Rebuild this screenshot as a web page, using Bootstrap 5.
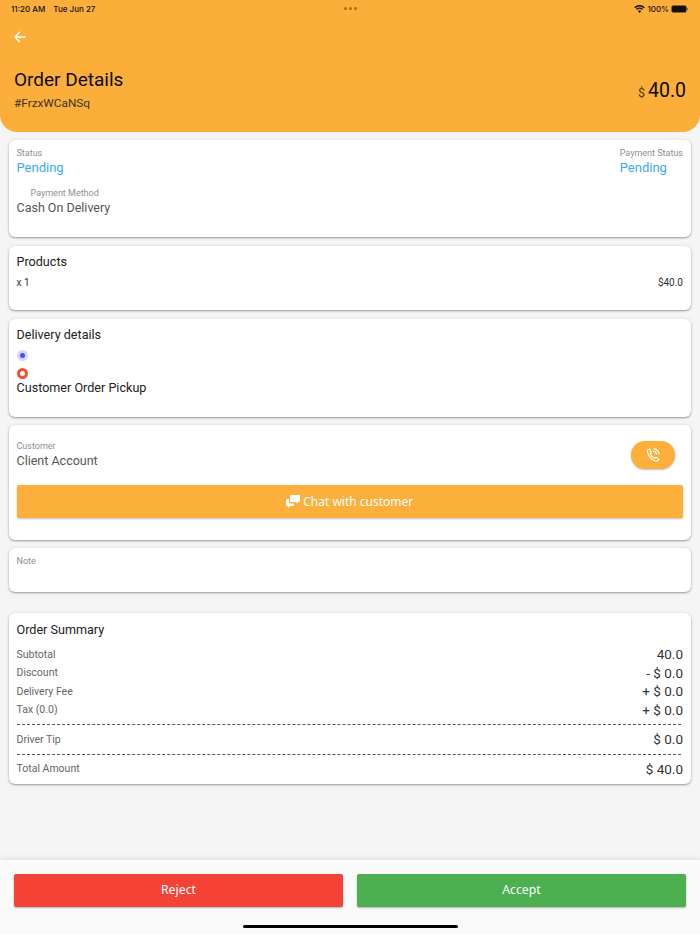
<!DOCTYPE html>
<html lang="en">
<head>
<meta charset="utf-8">
<title>Order Details</title>
<link href="https://cdn.jsdelivr.net/npm/bootstrap@5.3.0/dist/css/bootstrap.min.css" rel="stylesheet">
<style>
html,body{height:100%}
body{width:700px;height:934px;background:#f5f5f5;font-family:"Roboto","Noto Sans",sans-serif;color:#222;overflow:hidden}
.app{height:934px}
.hero{background:#fbae3a;height:132px;border-radius:0 0 17px 17px;padding:0 14px}
.statusbar{height:17px;font-family:"Inter",sans-serif;font-size:8px;font-weight:500;color:#111;margin:0 -3px}
.sb-side{flex:1 1 0}
.dots{gap:2px}
.dots i{width:3px;height:3px;border-radius:50%;background:#a86c14;display:block}
.back{margin-top:14px;height:15px;line-height:0}
.hero-main{margin-top:21px}
.hero-title{font-size:19px;font-weight:400;color:#0b0b0b;line-height:26px;margin:0}
.hero-id{font-size:11.800px;color:#3a3320;line-height:18px;margin-top:1px}
.hero-price{font-size:19.5px;color:#0b0b0b;line-height:26px;margin-top:4px}
.hero-price small{font-size:12.5px;color:#4a3a18;margin-right:3px}
.panel{margin:0 9px;border:0;border-radius:6px;background:#fff;box-shadow:0 1px 2px rgba(0,0,0,.35),0 0 4px rgba(0,0,0,.08);padding:0 8px 0 7.500px}
.cap{font-size:9px;color:#8d8d95;line-height:11px}
.pending{font-size:13px;color:#39a9f8;line-height:17px}
.val{font-size:12.500px;color:#555;line-height:17px}
.ttl{font-size:12.600px;color:#222;line-height:17px}
.p1{height:97px;margin-top:8px;padding-top:8px}
.p2{height:64px;margin-top:9px;padding-top:7px}
.p3{height:98px;margin-top:9px;padding-top:7px}
.p4{height:115px;margin-top:8px;padding-top:16px}
.p5{height:44px;margin-top:8px;padding-top:8px}
.p6{height:171px;margin-top:21px;padding-top:8px}
.mini{font-size:10px;color:#333;line-height:13px}
.radio-a{width:11px;height:11px;border-radius:50%;background:#d5d8fb;margin-top:7px;display:flex;align-items:center;justify-content:center}
.radio-a i{width:5px;height:5px;border-radius:50%;background:#4650f0;display:block}
.radio-b{width:11px;height:11px;border-radius:50%;border:3px solid #f4512f;margin-top:7px;background:#fff}
.call{width:44px;height:28px;border-radius:14px;background:#fcaf3a;box-shadow:0 1px 2px rgba(0,0,0,.25);margin-right:8.500px;margin-top:-1px;border:0;padding:0}
.chat{height:33px;background:#fcaf3a;color:#fff;border:0;border-radius:2px;font-family:"Noto Sans",sans-serif;font-size:12px;box-shadow:0 1px 2px rgba(0,0,0,.25);margin-top:16px;width:100%;gap:3px;padding:0}
.rowline{height:18.5px}
.rowline .lbl{font-size:10.500px;color:#666;line-height:18px;padding-top:.5px}
.rowline .amt{font-size:13.500px;color:#333;line-height:18px}
.dash{border-top:1px dashed #555;margin:5px 2px 5px 0}
.bottom{position:absolute;left:0;right:0;top:860px;height:74px;background:#fafafa;box-shadow:0 -1px 6px rgba(0,0,0,.1);padding:14px 14px 0}
.act{height:33px;width:329px;border:0;border-radius:2px;color:#fff;font-size:12.300px;padding:0;box-shadow:0 1px 2px rgba(0,0,0,.3);font-family:"Noto Sans",sans-serif}
.rej{background:#f44336}.acc{background:#4caf50}
.home{position:absolute;left:243px;top:65px;width:215px;height:3px;border-radius:2px;background:#000}
</style>
</head>
<body>
<div class="app position-relative">
<header class="hero">
  <div class="statusbar d-flex align-items-center justify-content-between">
    <div class="sb-side d-flex" style="gap:8px"><span>11:20 AM</span><span>Tue Jun 27</span></div>
    <div class="dots d-flex"><i></i><i></i><i></i></div>
    <div class="sb-side d-flex align-items-center justify-content-end" style="gap:2px">
      <svg width="11" height="8" viewBox="0 0 11 8"><path d="M5.5 8 3.8 6a2.4 2.4 0 0 1 3.4 0Z M2.9 5 2 4a5 5 0 0 1 7 0L8.100 5a3.700 3.700 0 0 0-5.200 0Z M1.200 3.200.2 2.200a7.500 7.500 0 0 1 10.600 0l-1 1a6.100 6.100 0 0 0-8.600 0Z" fill="#111"/></svg>
      <span>100%</span>
      <svg width="18" height="8" viewBox="0 0 18 8"><rect x=".5" y=".5" width="15" height="7" rx="2" fill="#111" stroke="#8a6420"/><rect x="16" y="3" width="1" height="2" fill="#8a6420"/></svg>
    </div>
  </div>
  <div class="back"><svg width="12" height="12" viewBox="0 0 12 12" fill="none" stroke="#fff" stroke-width="1.400" stroke-linecap="round" stroke-linejoin="round"><path d="M11 6H1M5.500 1.200 1 6l4.500 4.800"/></svg></div>
  <div class="hero-main d-flex justify-content-between align-items-center">
    <div><h1 class="hero-title">Order Details</h1><div class="hero-id">#FrzxWCaNSq</div></div>
    <div class="hero-price"><small>$</small>40.0</div>
  </div>
</header>

<section class="card panel p1">
  <div class="d-flex justify-content-between">
    <div><div class="cap">Status</div><div class="pending">Pending</div></div>
    <div><div class="cap">Payment Status</div><div class="pending">Pending</div></div>
  </div>
  <div class="cap" style="padding-left:14px;margin-top:12px">Payment Method</div>
  <div class="val">Cash On Delivery</div>
</section>

<section class="card panel p2">
  <div class="ttl">Products</div>
  <div class="d-flex justify-content-between mini" style="margin-top:6px"><span>x 1</span><span>$40.0</span></div>
</section>

<section class="card panel p3">
  <div class="ttl">Delivery details</div>
  <div class="radio-a"><i></i></div>
  <div class="radio-b"></div>
  <div class="ttl">Customer Order Pickup</div>
</section>

<section class="card panel p4">
  <div class="d-flex justify-content-between align-items-center">
    <div><div class="cap">Customer</div><div class="val">Client Account</div></div>
    <button class="call d-flex align-items-center justify-content-center" type="button" aria-label="Call">
      <svg width="14" height="14" viewBox="0 0 14 14" fill="none" stroke="#fff" stroke-width="1.200" stroke-linecap="round" stroke-linejoin="round"><path d="M3.600 1 2 1.800C1 2.600 1.200 4.400 2.500 6.800 4 9.800 7 12.600 9.800 13c1.500.2 2.600-.4 3-1.800l-2.800-2-1.400 1.100C7 9.600 5 7.500 4.200 5.800l1.200-1.300Z"/><path d="M7.500 3.200a3.600 3.600 0 0 1 3 3M8 .8a6 6 0 0 1 5 5"/></svg>
    </button>
  </div>
  <button class="chat d-flex align-items-center justify-content-center" type="button">
    <svg width="14" height="13" viewBox="0 0 14 13" fill="#fff"><path d="M5 0h8a1 1 0 0 1 1 1v5a1 1 0 0 1-1 1h-1v2l-2-2H5a1 1 0 0 1-1-1V1a1 1 0 0 1 1-1Z"/><path d="M1 4h2v3a1.500 1.500 0 0 0 1.500 1.500H8V10a1 1 0 0 1-1 1H4l-2 2v-2H1a1 1 0 0 1-1-1V5a1 1 0 0 1 1-1Z"/></svg>
    <span>Chat with customer</span>
  </button>
</section>

<section class="card panel p5"><div class="cap">Note</div></section>

<section class="card panel p6">
  <div class="ttl" style="margin-bottom:7px">Order Summary</div>
  <div class="rowline d-flex justify-content-between"><span class="lbl">Subtotal</span><span class="amt">40.0</span></div>
  <div class="rowline d-flex justify-content-between"><span class="lbl">Discount</span><span class="amt">- $ 0.0</span></div>
  <div class="rowline d-flex justify-content-between"><span class="lbl">Delivery Fee</span><span class="amt">+ $ 0.0</span></div>
  <div class="rowline d-flex justify-content-between"><span class="lbl">Tax (0.0)</span><span class="amt">+ $ 0.0</span></div>
  <div class="dash"></div>
  <div class="rowline d-flex justify-content-between"><span class="lbl">Driver Tip</span><span class="amt">$ 0.0</span></div>
  <div class="dash"></div>
  <div class="rowline d-flex justify-content-between"><span class="lbl">Total Amount</span><span class="amt">$ 40.0</span></div>
</section>

<footer class="bottom">
  <div class="d-flex justify-content-between">
    <button class="btn act rej" type="button">Reject</button>
    <button class="btn act acc" type="button">Accept</button>
  </div>
  <div class="home"></div>
</footer>
</div>
<script src="https://cdn.jsdelivr.net/npm/bootstrap@5.3.0/dist/js/bootstrap.bundle.min.js"></script>
</body>
</html>
